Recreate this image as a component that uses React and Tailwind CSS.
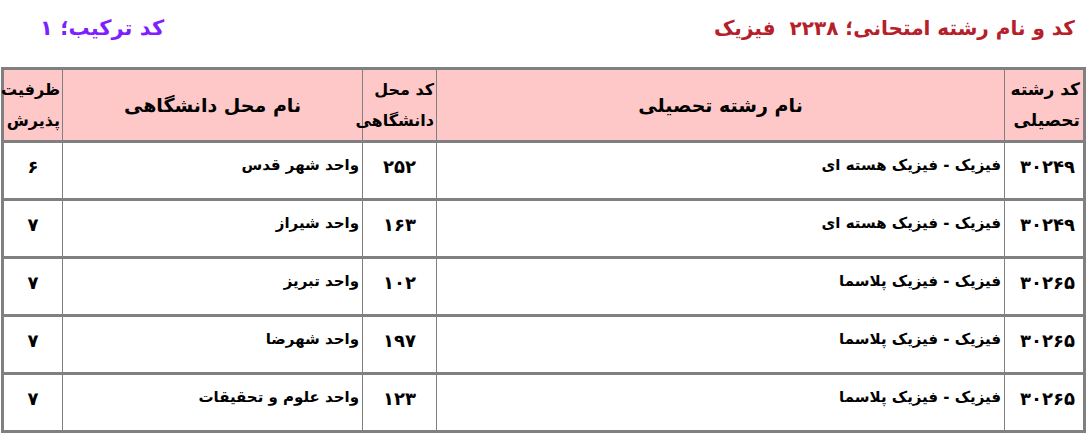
import React from "react";

const rows = [
  { code: "۳۰۲۴۹", name: "فیزیک - فیزیک هسته ای", uc: "۲۵۲", uname: "واحد شهر قدس", cap: "۶" },
  { code: "۳۰۲۴۹", name: "فیزیک - فیزیک هسته ای", uc: "۱۶۳", uname: "واحد شیراز", cap: "۷" },
  { code: "۳۰۲۶۵", name: "فیزیک - فیزیک پلاسما", uc: "۱۰۲", uname: "واحد تبریز", cap: "۷" },
  { code: "۳۰۲۶۵", name: "فیزیک - فیزیک پلاسما", uc: "۱۹۷", uname: "واحد شهرضا", cap: "۷" },
  { code: "۳۰۲۶۵", name: "فیزیک - فیزیک پلاسما", uc: "۱۲۳", uname: "واحد علوم و تحقیقات", cap: "۷" },
];

export default function App() {
  return (
    <div dir="rtl" className="w-[1088px] h-[437px] bg-white overflow-hidden" style={{ fontFamily: '"DejaVu Sans", sans-serif' }}>
      <div className="h-[67px] flex items-start justify-between pr-[13px] pl-[40px] pt-[13px]">
        <div className="text-[20px] font-bold text-[#b5202a] whitespace-pre">کد و نام رشته امتحانی؛ ۲۲۳۸  فیزیک</div>
        <div className="text-[21px] font-bold text-[#7f1fff]">کد ترکیب؛ ۱</div>
      </div>
      <table className="ml-[1px] mr-[2px] w-[1085px] border-collapse table-fixed border-[3px] border-[#808080]">
        <colgroup>
          <col className="w-[80px]" />
          <col className="w-[568px]" />
          <col className="w-[74px]" />
          <col className="w-[300px]" />
          <col className="w-[60px]" />
        </colgroup>
        <thead>
          <tr className="h-[73px] bg-[#ffc8c8] text-[17px] font-bold text-black border-b-[3px] border-[#808080]">
            <th className="border-x border-[#808080] text-right align-middle px-[3px] leading-[31px] font-bold">کد رشته<br />تحصیلی</th>
            <th className="border-x border-[#808080] text-center align-middle font-bold text-[19px]">نام رشته تحصیلی</th>
            <th className="border-x border-[#808080] text-right align-middle px-[2px] leading-[31px] font-bold text-[16px]">کد محل<br />دانشگاهی</th>
            <th className="border-x border-[#808080] text-center align-middle font-bold text-[19px]">نام محل دانشگاهی</th>
            <th className="border-x border-[#808080] text-right align-middle px-[2px] leading-[31px] font-bold text-[16px]">ظرفیت<br />پذیرش</th>
          </tr>
        </thead>
        <tbody>
          {rows.map((r, i) => (
            <tr key={i} className="h-[58px] border-b-[3px] border-[#808080]">
              <td className="border-x border-[#808080] align-top text-right pr-[8px] pt-[10px] text-[18px] font-bold">{r.code}</td>
              <td className="border-x border-[#808080] align-top text-right pr-[3px] pt-[11px] text-[15px] font-bold">{r.name}</td>
              <td className="border-x border-[#808080] align-top text-center pt-[10px] text-[18px] font-bold">{r.uc}</td>
              <td className="border-x border-[#808080] align-top text-right pr-[3px] pt-[11px] text-[15px] font-bold">{r.uname}</td>
              <td className="border-x border-[#808080] align-top text-center pt-[10px] text-[18px] font-bold">{r.cap}</td>
            </tr>
          ))}
        </tbody>
      </table>
    </div>
  );
}
